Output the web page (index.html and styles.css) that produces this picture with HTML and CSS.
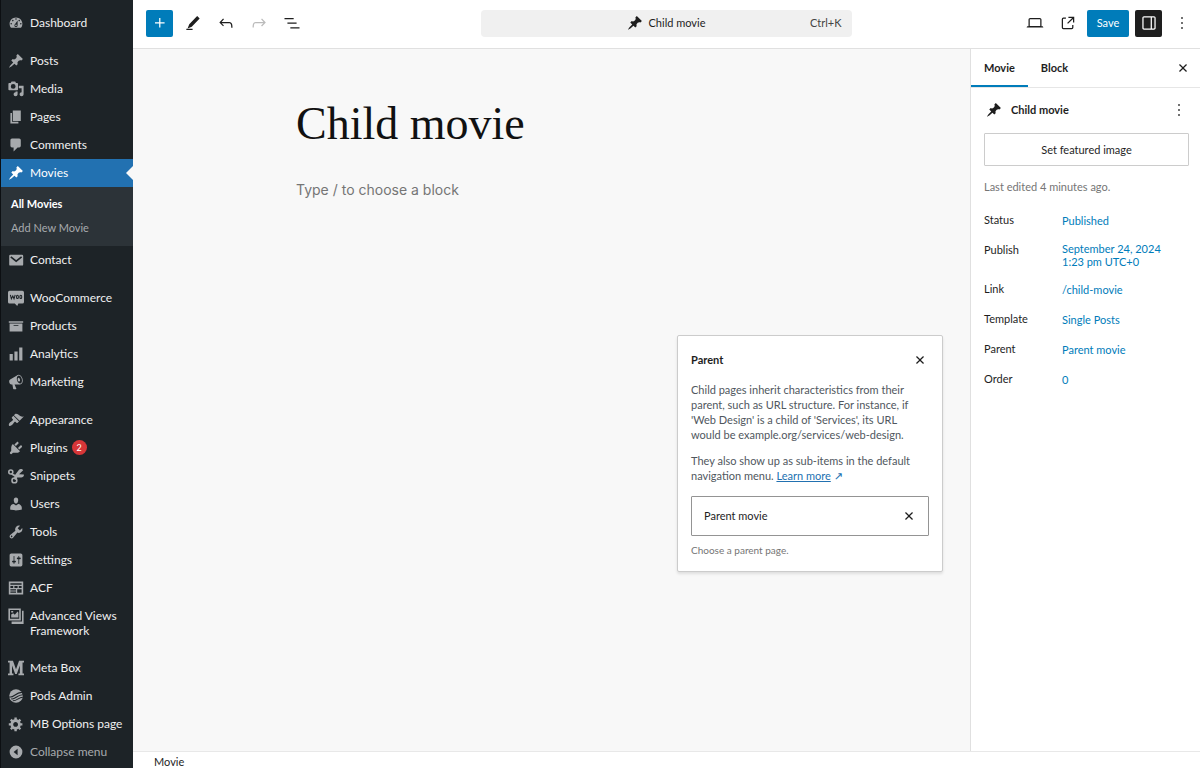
FILE: index.html
```html
<!DOCTYPE html>
<html lang="en">
<head>
<meta charset="utf-8">
<title>Edit Movie</title>
<link rel="stylesheet" href="styles.css">
</head>
<body>
<svg class="defs" aria-hidden="true">
  <symbol id="pin" viewBox="0 0 20 20"><path d="M10.44 3.02l1.82-1.82 6.36 6.35-1.83 1.82c-1.05-.68-2.48-.57-3.41.36l-.75.75c-.92.93-1.04 2.35-.35 3.41l-1.83 1.82-2.41-2.41-2.8 2.79c-.42.42-3.38 2.71-3.8 2.29s1.86-3.39 2.28-3.81l2.79-2.79L4.1 9.36l1.83-1.82c1.05.69 2.48.57 3.4-.36l.75-.75c.93-.92 1.05-2.35.36-3.41z"/></symbol>
  <symbol id="close" viewBox="0 0 24 24"><path d="M12 13.06l3.712 3.713 1.061-1.06L13.061 12l3.712-3.712-1.06-1.06L12 10.938 8.288 7.227l-1.061 1.06L10.939 12l-3.712 3.712 1.06 1.061L12 13.061z"/></symbol>
  <symbol id="more" viewBox="0 0 24 24"><path d="M13 19h-2v-2h2v2zm0-6h-2v-2h2v2zm0-6h-2V5h2v2z"/></symbol>
</svg>
<div class="app">
  <nav class="menu" aria-label="Main menu">
    <ul class="menu-group">
      <li><a class="menu-item" href="#"><svg viewBox="0 0 20 20"><path d="M3.76 16h12.48c1.1-1.37 1.76-3.11 1.76-5 0-4.42-3.58-8-8-8s-8 3.58-8 8c0 1.89.66 3.63 1.76 5zM10 4c.55 0 1 .45 1 1s-.45 1-1 1-1-.45-1-1 .45-1 1-1zM6 6c.55 0 1 .45 1 1s-.45 1-1 1-1-.45-1-1 .45-1 1-1zm8 0c.55 0 1 .45 1 1s-.45 1-1 1-1-.45-1-1 .45-1 1-1zm-5.37 5.55L12 7v6c0 1.1-.9 2-2 2s-2-.9-2-2c0-.57.24-1.08.63-1.45zM4 10c.55 0 1 .45 1 1s-.45 1-1 1-1-.45-1-1 .45-1 1-1zm12 0c.55 0 1 .45 1 1s-.45 1-1 1-1-.45-1-1 .45-1 1-1zm-5 3c0-.55-.45-1-1-1s-1 .45-1 1 .45 1 1 1 1-.45 1-1z"/></svg><span>Dashboard</span></a></li>
    </ul>
    <ul class="menu-group">
      <li><a class="menu-item" href="#"><svg><use href="#pin"/></svg><span>Posts</span></a></li>
      <li><a class="menu-item" href="#"><svg viewBox="0 0 20 20"><path fill-rule="evenodd" d="M12.500 10.500V3.500c0-.55-.45-1-1-1h-1.500L9 .5H4.500L3.300 2.500H1.500c-.55 0-1 .45-1 1v7c0 .55.45 1 1 1h10c.55 0 1-.45 1-1zM6.500 3.800a3 3 0 1 1 0 6 3 3 0 0 1 0-6zM13.500 6H19.500v10.500c0 1.380-1.120 2.500-2.500 2.500s-2.500-1.120-2.500-2.500 1.120-2.500 2.500-2.500V9h-3.500V6zm-4 8.050V13h2.500v3.500c0 1.380-1.120 2.500-2.500 2.500S7 17.880 7 16.500 8.120 14 9.500 14z"/></svg><span>Media</span></a></li>
      <li><a class="menu-item" href="#"><svg viewBox="0 0 20 20"><path d="M6 15V2h10v13H6zm-1 1h8v2H3V5h2v11z"/></svg><span>Pages</span></a></li>
      <li><a class="menu-item" href="#"><svg viewBox="0 0 20 20"><path d="M5 2h9c1.1 0 2 .9 2 2v7c0 1.1-.9 2-2 2h-2l-5 5v-5H5c-1.1 0-2-.9-2-2V4c0-1.1.9-2 2-2z"/></svg><span>Comments</span></a></li>
      <li>
        <a class="menu-item menu-item--current" href="#"><svg><use href="#pin"/></svg><span>Movies</span></a>
        <ul class="submenu">
          <li><a class="submenu-item submenu-item--current" href="#">All Movies</a></li>
          <li><a class="submenu-item" href="#">Add New Movie</a></li>
        </ul>
      </li>
      <li><a class="menu-item" href="#"><svg viewBox="0 0 20 20"><path d="M3 3.5h14.500a1.500 1.500 0 0 1 1.500 1.500v10.500a1.500 1.500 0 0 1-1.500 1.500H3a1.500 1.500 0 0 1-1.500-1.500V5A1.500 1.500 0 0 1 3 3.500z"/><path class="cut-line" d="M3.500 6l6.700 5.500L17 6"/></svg><span>Contact</span></a></li>
    </ul>
    <ul class="menu-group">
      <li><a class="menu-item" href="#"><svg viewBox="0 0 20 20"><path d="M2 1h16a2 2 0 0 1 2 2v12a2 2 0 0 1-2 2h-5l-1.500 3-3-3H2a2 2 0 0 1-2-2V3a2 2 0 0 1 2-2z"/><path class="cut-line cut-line--thin" d="M3 6l1.200 5L6 7.500 7.500 11 9 6M11.800 6.500c-1.600 0-1.600 4.200 0 4.200s1.600-4.200 0-4.200zM16 6.500c-1.600 0-1.600 4.200 0 4.200s1.600-4.200 0-4.200z"/></svg><span>WooCommerce</span></a></li>
      <li><a class="menu-item" href="#"><svg viewBox="0 0 20 20"><path d="M19 4v2H1V4h18zM2 7h16v10H2V7zm11 3V9H7v1h6z"/></svg><span>Products</span></a></li>
      <li><a class="menu-item" href="#"><svg viewBox="0 0 20 20"><path d="M18 18V2h-4v16h4zm-6 0V7H8v11h4zm-6 0v-8H2v8h4z"/></svg><span>Analytics</span></a></li>
      <li><a class="menu-item" href="#"><svg viewBox="0 0 20 20"><path d="M18.150 5.940c.46 1.620.38 3.220-.02 4.480-.42 1.280-1.260 2.180-2.300 2.480-.16.06-.26.06-.4.06-.06.02-.12.02-.18.02-.06.02-.14.02-.22.02h-6.800l2.220 5.500c.02.14-.06.26-.14.34-.08.1-.24.16-.34.16H6.950c-.1 0-.26-.06-.34-.16-.08-.08-.16-.2-.14-.34l-1-5.500H4.250l-.02-.02c-.5.06-1.080-.18-1.540-.62s-.88-1.080-1.060-1.880c-.24-.8-.2-1.560-.02-2.200.18-.62.58-1.080 1.060-1.300l.02-.02 9-5.400c.1-.06.18-.1.24-.16.06-.04.14-.08.24-.12.16-.08.28-.12.5-.18 1.040-.3 2.240.1 3.220.98s1.840 2.240 2.260 3.860zm-2.580 5.980h-.02c.4-.1.74-.34 1.040-.7.58-.7.86-1.760.86-3.040 0-.64-.1-1.300-.28-1.980-.34-1.360-1.020-2.500-1.780-3.240s-1.680-1.100-2.460-.88c-.82.22-1.400.96-1.700 2-.32 1.040-.28 2.360.06 3.720.38 1.360 1 2.500 1.800 3.240.78.74 1.620 1.100 2.480.88zm-2.540-7.080c.22-.04.42-.02.62.04.38.16.76.48 1.020 1s.42 1.200.42 1.780c0 .3-.04.56-.12.8-.18.48-.44.84-.86.94-.34.1-.8-.06-1.140-.4s-.64-.86-.78-1.500c-.18-.62-.12-1.240.02-1.720s.48-.84.82-.94z"/></svg><span>Marketing</span></a></li>
    </ul>
    <ul class="menu-group">
      <li><a class="menu-item" href="#"><svg viewBox="0 0 20 20"><path d="M14.480 11.060L7.410 3.990l1.500-1.500c.5-.56 2.300-.47 3.510.32 1.210.8 1.430 1.280 2.910 2.100 1.180.64 2.450 1.260 4.450.85zm-.71.71L6.700 4.700 4.930 6.470c-.39.39-.39 1.020 0 1.410l1.060 1.060c.39.39.39 1.030 0 1.420-.6.6-1.430 1.110-2.210 1.690-.35.26-.7.53-1.010.84C1.430 14.230.4 16.080 1.400 17.070c.99 1 2.840-.03 4.180-1.360.31-.31.58-.66.85-1.020.57-.78 1.080-1.610 1.690-2.210.39-.39 1.020-.39 1.410 0l1.060 1.060c.39.39 1.020.39 1.410 0z"/></svg><span>Appearance</span></a></li>
      <li><a class="menu-item" href="#"><svg viewBox="0 0 20 20"><path d="M13.110 4.360L9.870 7.600 8 5.730l3.240-3.240c.35-.34 1.050-.2 1.560.32.52.51.66 1.210.31 1.550zm-8 1.770l.91-1.120 9.010 9.010-1.190.84c-.71.71-2.630 1.160-3.820 1.160H6.140L4.900 17.260c-.59.59-1.540.59-2.120 0-.59-.58-.59-1.530 0-2.120l1.240-1.240v-3.880c0-1.130.4-3.190 1.090-3.890zm7.260 3.970l3.240-3.240c.34-.35 1.040-.21 1.550.31.52.51.66 1.210.31 1.550l-3.240 3.250z"/></svg><span>Plugins</span><span class="count">2</span></a></li>
      <li><a class="menu-item" href="#"><svg viewBox="0 0 20 20"><circle class="ring" cx="3.500" cy="5" r="2.500"/><circle class="ring" cx="8" cy="15.500" r="3"/><path d="M5 6.500l4 2L13.500 2.500c1.500-2 4.500-1.300 5.500.4L13.800 7.800l6 .2c.6 2.400-1.200 4-3.500 3.900L11.500 12l-1.500 3-2.800-1.200 1-2.800L3.800 8.200z"/></svg><span>Snippets</span></a></li>
      <li><a class="menu-item" href="#"><svg viewBox="0 0 20 20"><path d="M10 9.250c-2.270 0-2.730-3.440-2.730-3.440C7 4.020 7.820 2 9.970 2c2.160 0 2.980 2.020 2.710 3.810 0 0-.41 3.440-2.680 3.440zm0 2.570L12.720 10c2.390 0 4.520 2.330 4.520 4.530v2.490s-3.650 1.130-7.240 1.130c-3.650 0-7.240-1.130-7.240-1.130v-2.490c0-2.250 1.940-4.480 4.470-4.480z"/></svg><span>Users</span></a></li>
      <li><a class="menu-item" href="#"><svg viewBox="0 0 20 20"><path d="M16.680 9.770c-1.340 1.340-3.300 1.670-4.950.99l-5.410 6.520c-.99.99-2.590.99-3.580 0s-.99-2.590 0-3.570l6.520-5.420c-.68-1.650-.35-3.610.99-4.950 1.280-1.280 3.120-1.620 4.720-1.060l-2.890 2.890 2.820 2.820 2.860-2.870c.53 1.580.18 3.390-1.080 4.650zM3.810 16.210c.4.39 1.040.39 1.430 0 .4-.4.4-1.040 0-1.430-.39-.4-1.030-.4-1.430 0-.39.39-.39 1.030 0 1.430z"/></svg><span>Tools</span></a></li>
      <li><a class="menu-item" href="#"><svg viewBox="0 0 20 20"><path d="M18 16V4c0-1.100-.9-2-2-2H4c-1.100 0-2 .9-2 2v12c0 1.100.9 2 2 2h12c1.100 0 2-.9 2-2zM8 11h1c.55 0 1 .45 1 1s-.45 1-1 1H8v1.500c0 .28-.22.5-.5.5s-.5-.22-.5-.5V13H6c-.55 0-1-.45-1-1s.45-1 1-1h1V5.500c0-.28.22-.5.5-.5s.5.22.5.5V11zm5-2h-1c-.55 0-1-.45-1-1s.45-1 1-1h1V5.500c0-.28.22-.5.5-.5s.5.22.5.5V7h1c.55 0 1 .45 1 1s-.45 1-1 1h-1v5.500c0 .28-.22.5-.5.5s-.5-.22-.5-.5V9z"/></svg><span>Settings</span></a></li>
      <li><a class="menu-item" href="#"><svg viewBox="0 0 20 20"><path fill-rule="evenodd" d="M1 2h18v16H1zM3 4v2h14V4zM3 7.500v2.500h3.500V7.500zM8 7.500v2.500h4V7.500zM13.500 7.500v2.500H17V7.500zM3 11.500V13h7v-1.500zM3 14.500V16h7v-1.500zM11.500 11.500V16H17v-4.500z"/></svg><span>ACF</span></a></li>
      <li><a class="menu-item" href="#"><svg viewBox="0 0 20 20"><path fill-rule="evenodd" d="M.5.5h15.500v15H.5zM2.500 2.500v11H14v-11zM4 12V8l2.500-1.500 2 2 3.500-4L13 6v6zM4 3.700h2.500v2H4zM17.500 3.500h2V20H4.500V17h13z"/></svg><span>Advanced Views Framework</span></a></li>
    </ul>
    <ul class="menu-group">
      <li><a class="menu-item" href="#"><svg viewBox="0 0 20 20"><path d="M0 1h6.200L10 11.500 13.800 1H20v2.200h-1.800v13.600H20V19h-7v-2.200h1.800V7L11 17.500H9L5 7v9.800h1.800V19H0v-2.200h2V3.200H0z"/></svg><span>Meta Box</span></a></li>
      <li><a class="menu-item" href="#"><svg viewBox="0 0 20 20"><circle cx="10" cy="10" r="8.500"/><path class="cut-line cut-line--thin" d="M1.500 11c5 2.500 8-6 16-5.500M4 13.500c5 1.500 7-5 14.500-5M6 16c5 .5 7-4.500 12.500-4.500"/></svg><span>Pods Admin</span></a></li>
      <li><a class="menu-item" href="#"><svg viewBox="0 0 20 20"><path d="M18 12h-2.180c-.17.7-.44 1.350-.81 1.930l1.540 1.540-2.100 2.100-1.540-1.540c-.58.36-1.230.63-1.910.79V19H8v-2.180c-.68-.16-1.330-.43-1.910-.79l-1.540 1.540-2.120-2.120 1.540-1.540c-.36-.58-.63-1.230-.79-1.910H1V9.030h2.170c.16-.7.44-1.350.8-1.940L2.430 5.550l2.100-2.100 1.540 1.540c.58-.37 1.240-.64 1.930-.81V2h3v2.180c.68.16 1.330.43 1.910.79l1.540-1.540 2.120 2.120-1.540 1.540c.36.59.64 1.240.8 1.940H18V12zm-8.500 1.500c1.660 0 3-1.340 3-3s-1.340-3-3-3-3 1.340-3 3 1.340 3 3 3z"/></svg><span>MB Options page</span></a></li>
      <li><button class="menu-item menu-item--collapse" type="button"><svg viewBox="0 0 20 20"><path fill-rule="evenodd" d="M10 2a8 8 0 1 1 0 16 8 8 0 0 1 0-16zm2 4l-5 4 5 4z"/></svg><span>Collapse menu</span></button></li>
    </ul>
  </nav>

  <div class="editor">
    <header class="topbar">
      <div class="tools">
        <button class="icon-btn icon-btn--primary" type="button" aria-label="Add block"><svg viewBox="0 0 24 24"><path d="M11 12.500V17.500H12.500V12.500H17.500V11H12.500V6H11V11H6V12.500H11Z"/></svg></button>
        <button class="icon-btn" type="button" aria-label="Tools"><svg viewBox="0 0 24 24"><path d="M17 3.500 20 6.500 10.500 16.500 5.500 18.500 7.500 13.500ZM11.500 18.800H4v1.500h7.500Z"/></svg></button>
        <button class="icon-btn" type="button" aria-label="Undo"><svg viewBox="0 0 24 24"><path d="M18.300 11.700c-.6-.6-1.400-.9-2.300-.9H6.700l2.900-3.300-1.100-1-4.500 5L8.500 16l1-1-2.700-2.700H16c.5 0 .9.2 1.300.5 1 1 1 3.400 1 4.500v.3h1.500v-.2c0-1.500 0-4.300-1.500-5.700z"/></svg></button>
        <button class="icon-btn" type="button" aria-label="Redo" disabled><svg viewBox="0 0 24 24"><path d="M15.600 6.500l-1.100 1 2.900 3.300H8c-.9 0-1.700.3-2.300.9-1.400 1.500-1.400 4.200-1.400 5.600v.2h1.500v-.3c0-1.100 0-3.500 1-4.500.3-.3.7-.5 1.300-.5h9.200L14.500 15l1.100 1.100 4.600-4.600-4.600-5z"/></svg></button>
        <button class="icon-btn" type="button" aria-label="Document overview"><svg viewBox="0 0 24 24"><path d="M3 6h11v1.500H3V6Zm3.500 5.500h11V13h-11v-1.500ZM21 17H10v1.500h11V17Z"/></svg></button>
      </div>
      <button class="command" type="button">
        <span class="command-title"><svg><use href="#pin"/></svg>Child movie</span>
        <span class="command-key">Ctrl+K</span>
      </button>
      <div class="actions">
        <button class="icon-btn" type="button" aria-label="View"><svg viewBox="0 0 24 24"><path d="M20.500 16h-.7V8c0-1.100-.9-2-2-2H6.200c-1.100 0-2 .9-2 2v8h-.7c-.8 0-1.500.7-1.500 1.500h20c0-.8-.7-1.500-1.500-1.500zM5.700 8c0-.3.2-.5.5-.5h11.600c.3 0 .5.2.5.5v7.600H5.700V8z"/></svg></button>
        <button class="icon-btn" type="button" aria-label="View movie"><svg viewBox="0 0 24 24"><path d="M19.500 4.500h-7V6h4.440l-5.970 5.970 1.060 1.060L18 7.060v4.440h1.500v-7Zm-13 1a2 2 0 0 0-2 2v10a2 2 0 0 0 2 2h10a2 2 0 0 0 2-2v-3H17v3a.5.5 0 0 1-.5.5h-10a.5.5 0 0 1-.5-.5v-10a.5.5 0 0 1 .5-.5h3V5.500h-3Z"/></svg></button>
        <button class="save" type="button">Save</button>
        <button class="icon-btn icon-btn--pressed" type="button" aria-label="Settings"><svg viewBox="0 0 24 24"><path d="M18 4H6c-1.100 0-2 .9-2 2v12c0 1.100.9 2 2 2h12c1.100 0 2-.9 2-2V6c0-1.100-.9-2-2-2zm-4 14.500H6c-.3 0-.5-.2-.5-.5V6c0-.3.2-.5.5-.5h8v13zm4.500-.5c0 .3-.2.5-.5.5h-2.500v-13H18c.3 0 .5.2.5.5v12z"/></svg></button>
        <button class="icon-btn" type="button" aria-label="Options"><svg><use href="#more"/></svg></button>
      </div>
    </header>

    <div class="workspace">
      <main class="canvas">
        <h1 class="title">Child movie</h1>
        <p class="prompt">Type / to choose a block</p>
      </main>

      <aside class="panel">
        <div class="tabs">
          <button class="tab tab--active" type="button">Movie</button>
          <button class="tab" type="button">Block</button>
          <button class="icon-btn tabs-close" type="button" aria-label="Close settings"><svg><use href="#close"/></svg></button>
        </div>
        <div class="panel-body">
          <div class="card">
            <svg><use href="#pin"/></svg>
            <h2 class="card-title">Child movie</h2>
            <button class="icon-btn card-more" type="button" aria-label="Actions"><svg><use href="#more"/></svg></button>
          </div>
          <button class="featured" type="button">Set featured image</button>
          <p class="edited">Last edited 4 minutes ago.</p>
          <dl class="rows">
            <div class="row"><dt>Status</dt><dd><button class="value" type="button">Published</button></dd></div>
            <div class="row"><dt>Publish</dt><dd><button class="value value--two-line" type="button">September 24, 2024<br>1:23 pm UTC+0</button></dd></div>
            <div class="row"><dt>Link</dt><dd><button class="value" type="button">/child-movie</button></dd></div>
            <div class="row"><dt>Template</dt><dd><button class="value" type="button">Single Posts</button></dd></div>
            <div class="row"><dt>Parent</dt><dd><button class="value" type="button">Parent movie</button></dd></div>
            <div class="row"><dt>Order</dt><dd><button class="value" type="button">0</button></dd></div>
          </dl>
        </div>

        <section class="popover" aria-labelledby="popover-title">
          <div class="popover-head">
            <h2 class="popover-title" id="popover-title">Parent</h2>
            <button class="icon-btn" type="button" aria-label="Close"><svg><use href="#close"/></svg></button>
          </div>
          <p class="popover-text">Child pages inherit characteristics from their<br>parent, such as URL structure. For instance, if<br>'Web Design' is a child of 'Services', its URL<br>would be example.org/services/web-design.</p>
          <p class="popover-text">They also show up as sub-items in the default<br>navigation menu. <a class="learn" href="#">Learn more</a> <span class="arrow">↗</span></p>
          <div class="combo">
            <input class="combo-input" type="text" value="Parent movie" aria-label="Parent" aria-describedby="parent-help">
            <button class="icon-btn" type="button" aria-label="Reset"><svg><use href="#close"/></svg></button>
          </div>
          <p class="help" id="parent-help">Choose a parent page.</p>
        </section>
      </aside>
    </div>

    <footer class="breadcrumb">Movie</footer>
  </div>
</div>
</body>
</html>
```

FILE: styles.css
```css
* {
  box-sizing: border-box;
}

body {
  margin: 0;
  background: #fff;
  color: #1e1e1e;
  font: 11px/16px Lato, "Open Sans", sans-serif;
}

ul,
dl,
dd,
p,
h1,
h2 {
  margin: 0;
  padding: 0;
}

ul {
  list-style: none;
}

button,
input {
  border: 0;
  padding: 0;
  background: none;
  color: inherit;
  font: inherit;
}

svg {
  fill: currentColor;
}

.defs {
  position: absolute;
  width: 0;
  height: 0;
}

.app {
  display: flex;
  height: 100vh;
  overflow: hidden;
}

/* Admin menu */
.menu {
  display: flex;
  flex: none;
  flex-direction: column;
  gap: 10px;
  width: 133px;
  padding-top: 9px;
  overflow: hidden;
  border-left: 1px solid #0c0f12;
  background: #1d2327;
  color: #f0f0f1;
  font-size: 12px;
  line-height: 15px;
}

.menu-item {
  display: flex;
  position: relative;
  align-items: flex-start;
  gap: 6px;
  width: 100%;
  min-height: 28px;
  padding: 6px 4px 6px 7px;
  color: inherit;
  text-align: left;
  text-decoration: none;
}

.menu-item svg {
  flex: none;
  width: 16px;
  height: 16px;
  color: #a7aaad;
}

.menu-item--current {
  background: #2271b1;
  color: #fff;
}

.menu-item--current svg {
  color: #fff;
}

.menu-item--current::after {
  position: absolute;
  top: 7px;
  right: 0;
  border: 7px solid transparent;
  border-right-color: #f8f8f8;
  border-left-width: 0;
  content: "";
}

.menu-item--collapse {
  color: #a7aaad;
}

.cut-line,
.ring {
  fill: none;
  stroke: #1d2327;
  stroke-width: 2;
}

.cut-line--thin {
  stroke-width: 1.3;
}

.ring {
  stroke: currentColor;
}

.count {
  width: 15px;
  height: 15px;
  margin-left: -2px;
  border-radius: 50%;
  background: #d63638;
  color: #fff;
  font-size: 9px;
  text-align: center;
}

.submenu {
  height: 59px;
  padding: 5px 0;
  background: #2c3338;
}

.submenu-item {
  display: block;
  padding: 4px 10px 5px;
  color: #a7aaad;
  font-size: 11px;
  text-decoration: none;
}

.submenu-item--current {
  color: #fff;
  font-weight: 700;
}

/* Editor frame */
.editor {
  display: flex;
  flex: 1;
  flex-direction: column;
  min-width: 0;
}

.topbar {
  display: grid;
  flex: none;
  grid-template-columns: 1fr minmax(0, 371px) 1fr;
  align-items: center;
  height: 49px;
  padding: 0 5px 2px 4px;
  border-bottom: 1px solid #e0e0e0;
}

.tools,
.actions {
  display: flex;
  gap: 6px;
}

.tools {
  padding-left: 9px;
}

.actions {
  justify-content: flex-end;
}

.icon-btn {
  display: grid;
  flex: none;
  place-items: center;
  width: 27px;
  height: 27px;
  border-radius: 2px;
}

.icon-btn svg {
  width: 20px;
  height: 20px;
}

.icon-btn:disabled {
  color: #bbb;
}

.icon-btn--primary,
.save {
  background: #007cba;
  color: #fff;
}

.icon-btn--pressed {
  background: #1e1e1e;
  color: #fff;
}

.save {
  width: 42px;
  border-radius: 2px;
}

.command {
  display: grid;
  grid-template-columns: 1fr auto 1fr;
  align-items: center;
  height: 27px;
  padding: 0 10px;
  border-radius: 4px;
  background: #f0f0f0;
}

.command-title {
  display: flex;
  grid-column: 2;
  align-items: center;
  gap: 6px;
}

.command-title svg {
  width: 16px;
  height: 16px;
}

.command-key {
  color: #444;
  text-align: right;
}

.workspace {
  display: flex;
  flex: 1;
  min-height: 0;
}

.canvas {
  flex: 1;
  padding: 47px 163px;
  background: #f8f8f8;
}

.title {
  color: #111;
  font: 400 46px/56px "Liberation Serif", serif;
}

.prompt {
  margin-top: 28px;
  color: #757575;
  font: 14px/20px Inter, sans-serif;
}

.breadcrumb {
  flex: none;
  height: 17px;
  padding: 2px 21px 0;
  border-top: 1px solid #e8e8e8;
}

/* Settings panel */
.panel {
  position: relative;
  flex: none;
  width: 230px;
  border-left: 1px solid #e0e0e0;
}

.tabs {
  display: flex;
  height: 39px;
  padding-right: 4px;
  border-bottom: 1px solid #e6e6e6;
}

.tab {
  padding: 0 13px;
  font-weight: 700;
}

.tab--active {
  box-shadow: inset 0 -2px #007cba;
}

.tabs-close {
  align-self: center;
  margin-left: auto;
}

.panel-body {
  padding: 8px 11px 0 13px;
}

.card {
  display: flex;
  align-items: center;
  height: 27px;
}

.card > svg {
  width: 16px;
  height: 16px;
  margin: 0 9px 0 2px;
}

.card-title {
  font-size: 11px;
  font-weight: 700;
}

.card-more {
  width: 20px;
  margin-left: auto;
}

.featured {
  display: block;
  width: 100%;
  height: 33px;
  margin-top: 10px;
  border: 1px solid #ccc;
  border-radius: 1px;
}

.edited {
  margin: 13px 0 12px;
  color: #757575;
}

.rows {
  display: grid;
  gap: 4px;
}

.row {
  display: grid;
  grid-template-columns: 78px 1fr;
}

.row dt {
  padding: 5px 0;
}

.value {
  min-height: 26px;
  color: #007cba;
  line-height: 13px;
  text-align: left;
}

.value--two-line {
  padding: 5px 0 4px;
}

/* Parent popover */
.popover {
  position: absolute;
  top: 286px;
  right: calc(100% + 28px);
  width: 266px;
  padding: 10px 13px 13px;
  border: 1px solid #ccc;
  border-radius: 2px;
  background: #fff;
  box-shadow: 0 2px 3px rgba(0, 0, 0, 0.1);
}

.popover-head {
  display: flex;
  align-items: center;
  justify-content: space-between;
  margin-right: -4px;
}

.popover-title {
  font-size: 11px;
  font-weight: 700;
}

.popover-text {
  margin-top: 11px;
  color: #50575e;
  line-height: 15px;
  white-space: nowrap;
}

.popover-head + .popover-text {
  margin-top: 9px;
}

.learn {
  color: #2271b1;
}

.arrow {
  color: #2271b1;
  font-family: "DejaVu Sans", sans-serif;
}

.combo {
  display: flex;
  align-items: center;
  height: 40px;
  margin-top: 12px;
  padding: 0 6px 0 12px;
  border: 1px solid #949494;
  border-radius: 1px;
}

.combo-input {
  flex: 1;
  min-width: 0;
}

.help {
  margin-top: 6px;
  color: #757575;
  font-size: 10px;
}
```
